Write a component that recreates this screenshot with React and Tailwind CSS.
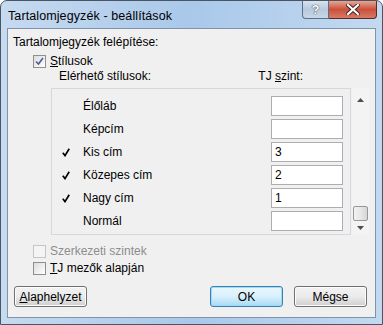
import React from "react";

const FONT = { fontFamily: '"Liberation Sans", Arial, sans-serif' };

const rows = [
  { name: "Élőláb", checked: false, level: "" },
  { name: "Képcím", checked: false, level: "" },
  { name: "Kis cím", checked: true, level: "3" },
  { name: "Közepes cím", checked: true, level: "2" },
  { name: "Nagy cím", checked: true, level: "1" },
  { name: "Normál", checked: false, level: "" },
];

const CheckBox = ({ checked, disabled }) => (
  <div
    className={`w-[13px] h-[13px] border flex items-center justify-center ${
      disabled ? "border-[#c5c5c5] bg-[#f4f4f4]" : "border-[#8e8f8f] bg-gradient-to-br from-[#dcdcdc] to-[#ffffff]"
    }`}
  >
    {checked && (
      <svg width="9" height="9" viewBox="0 0 9 9">
        <path d="M1 4.5 L3.5 7 L8 1" fill="none" stroke="#4a5f97" strokeWidth="1.6" />
      </svg>
    )}
  </div>
);

const Button = ({ children, primary, className = "" }) => (
  <button
    className={`h-[21px] w-[73px] rounded-[3px] border text-[12px] text-black ${
      primary
        ? "border-[#3c7fb1] shadow-[inset_0_0_0_1px_#9ddcf7] bg-gradient-to-b from-[#eaf6fd] via-[#d9f0fc] to-[#a7d9f5]"
        : "border-[#707070] shadow-[inset_0_0_0_1px_#fcfcfc] bg-gradient-to-b from-[#f2f2f2] via-[#ebebeb] to-[#cfcfcf]"
    } ${className}`}
  >
    {children}
  </button>
);

const Arrow = ({ up }) => (
  <svg width="7" height="4" viewBox="0 0 7 4">
    <path d={up ? "M0 4 L3.5 0 L7 4 Z" : "M0 0 L3.5 4 L7 0 Z"} fill="#4d4d4d" />
  </svg>
);

export default function App() {
  return (
    <div className="w-[383px] h-[325px] bg-white" style={FONT}>
      <div className="w-[383px] h-[325px] flex flex-col rounded-t-[7px] border border-[#4a5563] bg-gradient-to-r from-[#c6daf0] via-[#a9c8ea] to-[#c3d9f0] overflow-hidden">
        {/* Title bar */}
        <div className="h-[27px] flex items-start">
          <div className="pl-[7px] pt-[6px] text-[12.5px] text-black tracking-[0.1px]">Tartalomjegyzék - beállítások</div>
          <div className="ml-auto mr-[5px] flex">
            <div className="w-[27px] h-[18px] rounded-bl-[4px] border border-t-0 border-[#5b6f88] bg-gradient-to-b from-[#d7e3ef] via-[#b7c9dc] to-[#c9d8e7] flex items-center justify-center">
              <span className="text-white font-bold text-[13px] leading-none [text-shadow:0_0_1px_#2d3b4e,0_0_1px_#2d3b4e]">?</span>
            </div>
            <div className="w-[48px] h-[18px] rounded-br-[4px] border border-t-0 border-l-0 border-[#5a2a24] bg-gradient-to-b from-[#e7a594] via-[#c9503c] to-[#d77a63] flex items-center justify-center">
              <svg width="14" height="11" viewBox="0 0 14 11">
                <path d="M2 1 L12 10 M12 1 L2 10" stroke="#3a2320" strokeWidth="4" strokeLinecap="square" />
                <path d="M2 1 L12 10 M12 1 L2 10" stroke="#ffffff" strokeWidth="2.2" strokeLinecap="square" />
              </svg>
            </div>
          </div>
        </div>

        {/* Client area */}
        <div className="mx-[6px] mb-[6px] flex-1 border border-[#8193a8] bg-[#f0f0f0] text-[12px] text-black flex flex-col">
          <div className="pl-[5px] pt-[6px] leading-[15px]">Tartalomjegyzék felépítése:</div>

          <div className="flex items-center pl-[25px] mt-[4px] h-[14px]">
            <CheckBox checked />
            <span className="ml-[4px]"><span className="underline">S</span>tílusok</span>
          </div>

          <div className="flex h-[15px] leading-[15px] mt-[1px]">
            <span className="ml-[51px]">Elérhető stílusok:</span>
            <span className="ml-auto mr-[72px]">TJ <span className="underline">s</span>zint:</span>
          </div>

          {/* List with scrollbar */}
          <div className="flex ml-[43px] mt-[4px] h-[147px]">
            <div className="w-[300px] border border-[#d5d9de] bg-[#f0f0f0] pt-[7px] flex flex-col gap-[3px]">
              {rows.map((r) => (
                <div key={r.name} className="flex items-center h-[20px]">
                  <div className="w-[31px] pl-[10px] flex items-center">
                    {r.checked && (
                      <svg width="8" height="9" viewBox="0 0 8 9">
                        <path d="M0.8 4.8 L3 7.6 L7.2 0.8" fill="none" stroke="#000" strokeWidth="1.7" />
                      </svg>
                    )}
                  </div>
                  <span className="text-black">{r.name}</span>
                  <div className="ml-auto mr-[7px] w-[72px] h-[20px] border border-[#abadb3] bg-white pl-[3px] leading-[18px]">
                    {r.level}
                  </div>
                </div>
              ))}
            </div>
            <div className="w-[17px] ml-[1px] bg-[#f3f3f3] flex flex-col items-center">
              <div className="h-[14px] flex items-end justify-center"><Arrow up /></div>
              <div className="flex-1" />
              <div className="w-[15px] h-[15px] rounded-[2px] border border-[#979797] bg-gradient-to-r from-[#f2f2f2] via-[#e8e8e8] to-[#d6d6d6]" />
              <div className="h-[14px] flex items-start pt-[5px] justify-center"><Arrow /></div>
            </div>
          </div>

          <div className="flex items-center pl-[25px] mt-[9px] h-[14px] text-[#8d8d8d]">
            <CheckBox disabled />
            <span className="ml-[4px]">Szerkezeti szintek</span>
          </div>
          <div className="flex items-center pl-[25px] mt-[3px] h-[14px]">
            <CheckBox />
            <span className="ml-[4px]"><span className="underline">T</span>J mezők alapján</span>
          </div>

          <div className="flex mt-[11px] pl-[6px]">
            <Button><span className="underline">A</span>laphelyzet</Button>
            <Button primary className="ml-auto">OK</Button>
            <Button className="ml-[11px] mr-[8px]">Mégse</Button>
          </div>
        </div>
      </div>
    </div>
  );
}
